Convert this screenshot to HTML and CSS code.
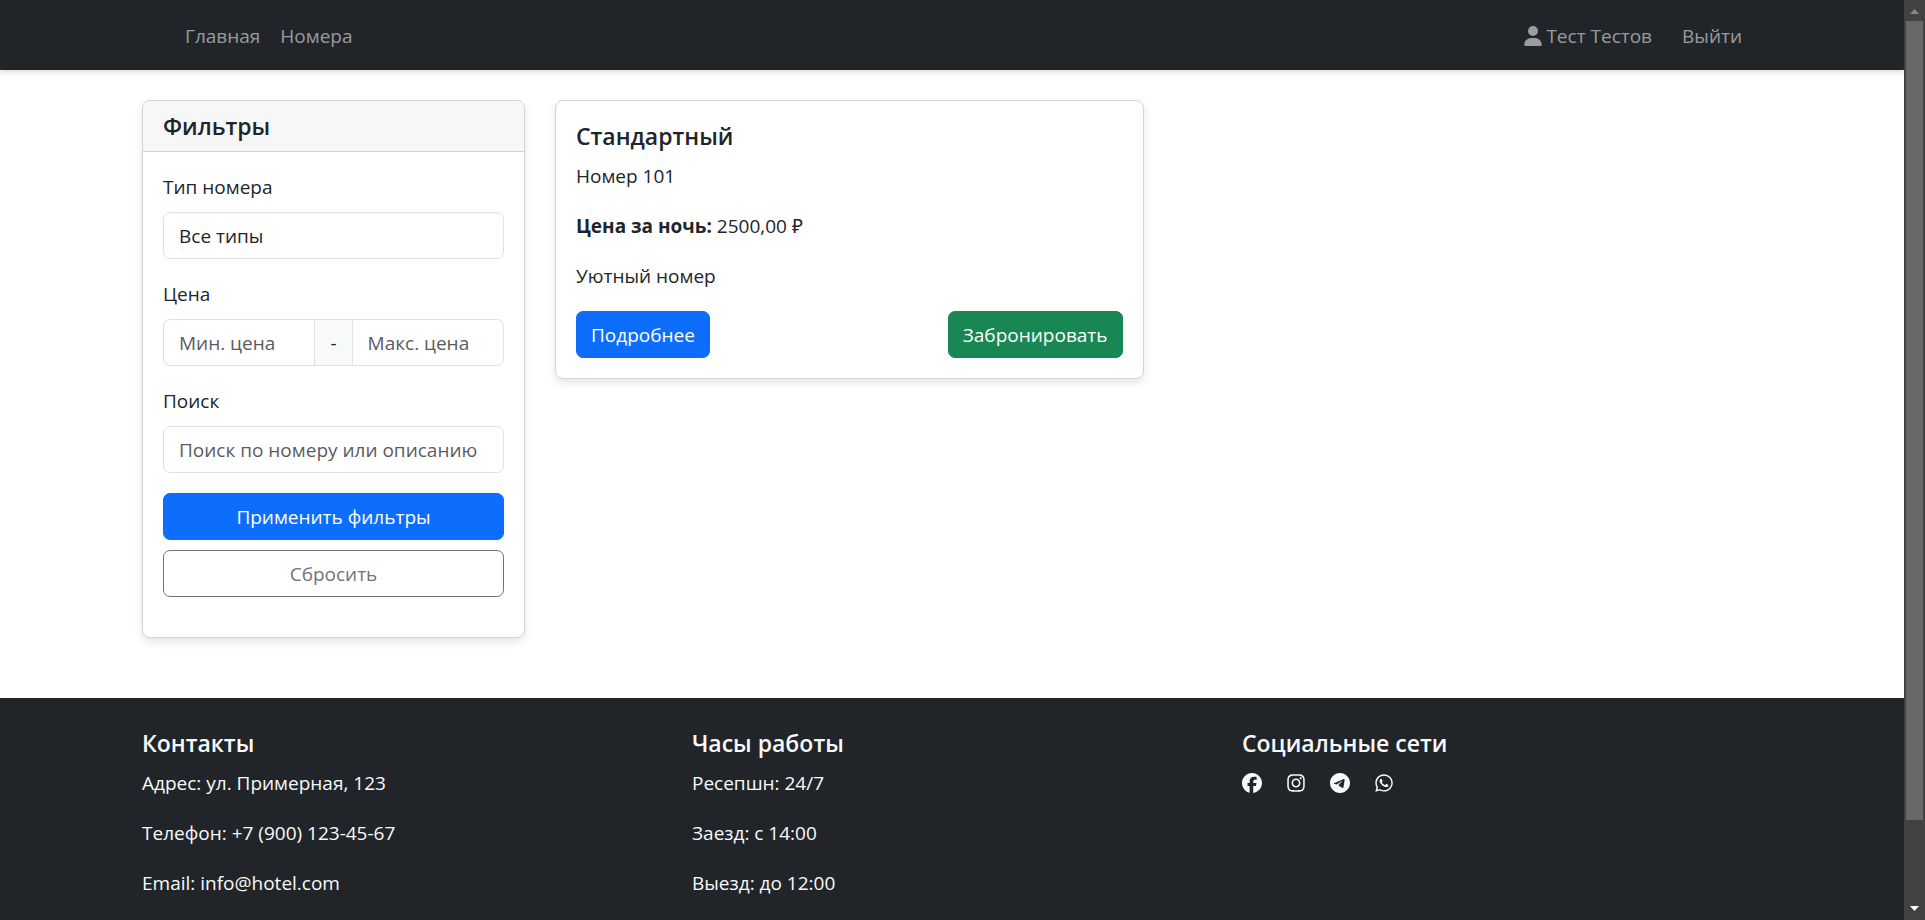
FILE: index.html
```html
<!DOCTYPE html>
<html lang="ru">
<head>
<meta charset="utf-8">
<title>Номера</title>
<link rel="stylesheet" href="styles.css">
</head>
<body>
<div class="page">
  <header class="navbar">
    <nav class="container navbar-inner" aria-label="Основное меню">
      <div class="nav-group">
        <a class="nav-link" href="#">Главная</a>
        <a class="nav-link" href="#">Номера</a>
      </div>
      <div class="nav-group nav-group-end">
        <a class="nav-link nav-user" href="#"><svg class="icon icon-narrow" viewBox="0 0 448 512" aria-hidden="true"><path d="M224 256A128 128 0 1 0 224 0a128 128 0 1 0 0 256zm-45.7 48C79.8 304 0 383.8 0 482.3C0 498.7 13.3 512 29.7 512H418.3c16.4 0 29.7-13.3 29.7-29.7C448 383.8 368.2 304 269.7 304H178.3z"/></svg>Тест Тестов</a>
        <a class="nav-link" href="#">Выйти</a>
      </div>
    </nav>
  </header>

  <main class="container layout">
    <aside class="card">
      <h5 class="card-header">Фильтры</h5>
      <form class="card-body filters">
        <div class="field">
          <label for="type">Тип номера</label>
          <select class="control" id="type"><option>Все типы</option></select>
        </div>
        <div class="field">
          <label for="min-price">Цена</label>
          <div class="input-group">
            <input class="control" id="min-price" type="text" placeholder="Мин. цена">
            <span class="input-addon">-</span>
            <input class="control" type="text" placeholder="Макс. цена" aria-label="Макс. цена">
          </div>
        </div>
        <div class="field">
          <label for="search">Поиск</label>
          <input class="control" id="search" type="text" placeholder="Поиск по номеру или описанию">
        </div>
        <div class="form-actions">
          <button class="btn btn-primary" type="submit">Применить фильтры</button>
          <button class="btn btn-outline" type="reset">Сбросить</button>
        </div>
      </form>
    </aside>

    <section class="rooms">
      <article class="card">
        <div class="card-body">
          <h5 class="title">Стандартный</h5>
          <p>Номер 101</p>
          <p><strong>Цена за ночь:</strong> 2500,00 ₽</p>
          <p>Уютный номер</p>
          <div class="room-actions">
            <a class="btn btn-primary" href="#">Подробнее</a>
            <a class="btn btn-success" href="#">Забронировать</a>
          </div>
        </div>
      </article>
    </section>
  </main>

  <footer class="footer">
    <div class="container footer-grid">
      <section>
        <h5 class="title">Контакты</h5>
        <p>Адрес: ул. Примерная, 123</p>
        <p>Телефон: +7 (900) 123-45-67</p>
        <p>Email: info@hotel.com</p>
      </section>
      <section>
        <h5 class="title">Часы работы</h5>
        <p>Ресепшн: 24/7</p>
        <p>Заезд: с 14:00</p>
        <p>Выезд: до 12:00</p>
      </section>
      <section>
        <h5 class="title">Социальные сети</h5>
        <div class="social">
          <a href="#" aria-label="Facebook"><svg class="icon" viewBox="0 0 512 512"><path d="M512 256C512 114.6 397.4 0 256 0S0 114.6 0 256C0 376 82.7 476.8 194.2 504.5V334.2H141.4V256h52.8V222.3c0-87.1 39.4-127.5 125-127.5c16.2 0 44.2 3.2 55.7 6.4V172c-6-.6-16.5-1-29.6-1c-42 0-58.2 15.9-58.2 57.2V256h83.6l-14.4 78.2H287V510.1C413.8 494.8 512 386.9 512 256h0z"/></svg></a>
          <a href="#" aria-label="Instagram"><svg class="icon icon-narrow" viewBox="0 0 448 512"><path d="M224.1 141c-63.6 0-114.9 51.3-114.9 114.9s51.3 114.9 114.9 114.9S339 319.5 339 255.9 287.7 141 224.1 141zm0 189.6c-41.1 0-74.7-33.5-74.7-74.7s33.5-74.7 74.7-74.7 74.7 33.5 74.7 74.7-33.6 74.7-74.7 74.7zm146.4-194.3c0 14.9-12 26.8-26.8 26.8-14.9 0-26.8-12-26.8-26.8s12-26.8 26.8-26.8 26.8 12 26.8 26.8zm76.1 27.2c-1.7-35.9-9.9-67.7-36.2-93.9-26.2-26.2-58-34.4-93.9-36.2-37-2.1-147.9-2.1-184.9 0-35.8 1.7-67.6 9.9-93.9 36.1s-34.4 58-36.2 93.9c-2.1 37-2.1 147.9 0 184.9 1.7 35.9 9.9 67.7 36.2 93.9s58 34.4 93.9 36.2c37 2.1 147.9 2.1 184.9 0 35.9-1.7 67.7-9.9 93.9-36.2 26.2-26.2 34.4-58 36.2-93.9 2.1-37 2.1-147.8 0-184.8zM398.8 388c-7.8 19.6-22.9 34.7-42.6 42.6-29.5 11.7-99.5 9-132.1 9s-102.7 2.6-132.1-9c-19.6-7.8-34.7-22.9-42.6-42.6-11.7-29.5-9-99.5-9-132.1s-2.6-102.7 9-132.1c7.8-19.6 22.9-34.7 42.6-42.6 29.5-11.7 99.5-9 132.1-9s102.7-2.6 132.1 9c19.6 7.8 34.7 22.9 42.6 42.6 11.7 29.5 9 99.5 9 132.1s2.7 102.7-9 132.1z"/></svg></a>
          <a href="#" aria-label="Telegram"><svg class="icon" viewBox="0 8 496 496"><path d="M248,8C111.033,8,0,119.033,0,256S111.033,504,248,504,496,392.967,496,256,384.967,8,248,8ZM362.952,176.66c-3.732,39.215-19.881,134.378-28.1,178.3-3.476,18.584-10.322,24.816-16.948,25.425-14.4,1.326-25.338-9.517-39.287-18.661-21.827-14.308-34.158-23.215-55.346-37.177-24.485-16.135-8.612-25,5.342-39.5,3.652-3.793,67.107-61.51,68.335-66.746.153-.655.3-3.1-1.154-4.384s-3.59-.849-5.135-.5q-3.283.746-104.608,69.142-14.845,10.194-26.894,9.934c-8.855-.191-25.888-5.006-38.551-9.123-15.531-5.048-27.875-7.717-26.8-16.291q.84-6.7,18.45-13.7,108.446-47.248,144.628-62.3c68.872-28.647,83.183-33.623,92.511-33.789,2.052-.034,6.639.474,9.61,2.885a10.452,10.452,0,0,1,3.53,6.716A43.765,43.765,0,0,1,362.952,176.66Z"/></svg></a>
          <a href="#" aria-label="WhatsApp"><svg class="icon icon-narrow" viewBox="0 0 448 512"><path d="M380.9 97.1C339 55.1 283.2 32 223.9 32c-122.4 0-222 99.6-222 222 0 39.1 10.2 77.3 29.6 111L0 480l117.7-30.9c32.4 17.7 68.9 27 106.1 27h.1c122.3 0 224.1-99.6 224.1-222 0-59.3-25.2-115-67.1-157zm-157 341.6c-33.2 0-65.7-8.9-94-25.7l-6.7-4-69.8 18.3L72 359.2l-4.4-7c-18.5-29.4-28.2-63.3-28.2-98.2 0-101.7 82.8-184.5 184.6-184.5 49.3 0 95.6 19.2 130.4 54.1 34.8 34.9 56.2 81.2 56.1 130.5 0 101.8-84.9 184.6-186.6 184.6zm101.2-138.2c-5.5-2.8-32.8-16.2-37.9-18-5.1-1.9-8.8-2.8-12.5 2.8-3.7 5.6-14.3 18-17.6 21.8-3.2 3.7-6.5 4.2-12 1.4-32.6-16.3-54-29.1-75.5-66-5.7-9.8 5.7-9.1 16.3-30.3 1.8-3.7.9-6.9-.5-9.7-1.4-2.8-12.5-30.1-17.1-41.2-4.5-10.8-9.1-9.3-12.5-9.5-3.2-.2-6.9-.2-10.6-.2-3.7 0-9.7 1.4-14.8 6.9-5.1 5.6-19.4 19-19.4 46.3 0 27.3 19.9 53.7 22.6 57.4 2.8 3.7 39.1 59.7 94.8 83.8 35.2 15.2 49 16.5 66.6 13.9 10.7-1.6 32.8-13.4 37.4-26.4 4.6-13 4.6-24.1 3.2-26.4-1.3-2.5-5-3.9-10.5-6.6z"/></svg></a>
        </div>
      </section>
    </div>
  </footer>
</div>
<div class="scrollbar" aria-hidden="true">
  <svg class="scroll-arrow scroll-arrow-up" viewBox="0 0 21 21"><path d="M6 14L10.500 9L15 14z"/></svg>
  <div class="scroll-track"><div class="scroll-thumb"></div></div>
  <svg class="scroll-arrow" viewBox="0 0 21 21"><path d="M6 7L10.500 12L15 7z"/></svg>
</div>
</body>
</html>
```
FILE: styles.css
```css
*,
*::before,
*::after {
  box-sizing: border-box;
}

body {
  display: flex;
  height: 100vh;
  margin: 0;
  font-family: "Open Sans", "Noto Sans", sans-serif;
  font-size: 19px;
  line-height: 30px;
  color: #212529;
  background: #fff;
}

.page {
  flex: 1;
  min-width: 0;
  overflow-y: auto;
  scrollbar-width: none;
}

.container {
  width: 100%;
  max-width: 1650px;
  margin: 0 auto;
  padding: 0 15px;
}

p {
  margin: 0 0 20px;
}

a {
  color: inherit;
  text-decoration: none;
}

.icon {
  display: block;
  width: 20px;
  height: 20px;
  fill: currentColor;
}

.icon-narrow {
  width: 18px;
}

/* Navigation */

.navbar {
  padding: 10px 0;
  background: #212529;
  box-shadow: 0 2px 5px rgba(0, 0, 0, 0.15);
}

.navbar-inner {
  display: flex;
  justify-content: space-between;
  padding: 0 25px 0 48px;
}

.nav-group {
  display: flex;
}

.nav-group-end {
  gap: 10px;
}

.nav-link {
  display: flex;
  align-items: center;
  padding: 11px 10px 9px;
  color: rgba(255, 255, 255, 0.55);
}

.nav-user {
  gap: 4px;
}

/* Content */

.layout {
  display: grid;
  grid-template-columns: calc(25% - 22px) 1fr;
  gap: 30px;
  align-items: start;
  padding-top: 30px;
  padding-bottom: 60px;
}

.rooms {
  display: grid;
  grid-template-columns: 1fr 1fr;
  gap: 30px;
}

.card {
  overflow: hidden;
  background: #fff;
  border: 1px solid #d3d3d4;
  border-radius: 8px;
  box-shadow: 0 4px 8px rgba(0, 0, 0, 0.1);
}

.card-header {
  margin: 0;
  padding: 10px 20px;
  font-size: 23px;
  font-weight: 600;
  line-height: 30px;
  background: #f7f7f7;
  border-bottom: 1px solid #d3d3d4;
}

.card-body {
  padding: 20px;
}

.title {
  margin: 0 0 10px;
  font-size: 23px;
  font-weight: 600;
  line-height: 30px;
}

.filters {
  display: flex;
  flex-direction: column;
  gap: 20px;
  padding-bottom: 40px;
}

.field {
  display: flex;
  flex-direction: column;
  gap: 10px;
}

.control {
  display: block;
  width: 100%;
  min-width: 0;
  height: 47px;
  padding: 8px 15px 7px;
  font: inherit;
  color: #212529;
  background: #fff;
  border: 1px solid #dee2e6;
  border-radius: 7px;
  appearance: none;
}

.control::placeholder {
  color: #595c5f;
  opacity: 1;
}

.input-group {
  display: flex;
}

.input-group .control {
  flex: 1;
}

.input-group .control:first-child {
  border-right: 0;
  border-radius: 7px 0 0 7px;
}

.input-group .control:last-child {
  border-left: 0;
  border-radius: 0 7px 7px 0;
}

.input-addon {
  padding: 8px 15px 7px;
  background: #f8f9fa;
  border: 1px solid #dee2e6;
}

.form-actions {
  display: grid;
  gap: 10px;
}

.btn {
  padding: 8px 14px 7px;
  font: inherit;
  text-align: center;
  border: 1px solid transparent;
  border-radius: 7px;
  cursor: pointer;
}

.btn-primary {
  color: #fff;
  background: #0d6efd;
  border-color: #0d6efd;
}

.btn-success {
  color: #fff;
  background: #198754;
  border-color: #198754;
}

.btn-outline {
  color: #6c757d;
  background: transparent;
  border-color: #6c757d;
}

.room-actions {
  display: flex;
  justify-content: space-between;
}

/* Footer */

.footer {
  padding: 30px 0;
  color: #f8f9fa;
  background: #212529;
}

.footer-grid {
  display: grid;
  grid-template-columns: repeat(3, 1fr);
  gap: 30px;
}

.social {
  display: flex;
  align-items: center;
  gap: 25px;
  height: 30px;
}

/* Window scrollbar */

.scrollbar {
  display: flex;
  flex-direction: column;
  width: 21px;
  background: #424242;
}

.scroll-arrow {
  width: 21px;
  height: 21px;
  fill: #fff;
}

.scroll-arrow-up {
  fill: #868686;
}

.scroll-track {
  flex: 1;
  padding: 0 2px;
}

.scroll-thumb {
  height: 91%;
  background: #686868;
}
```
